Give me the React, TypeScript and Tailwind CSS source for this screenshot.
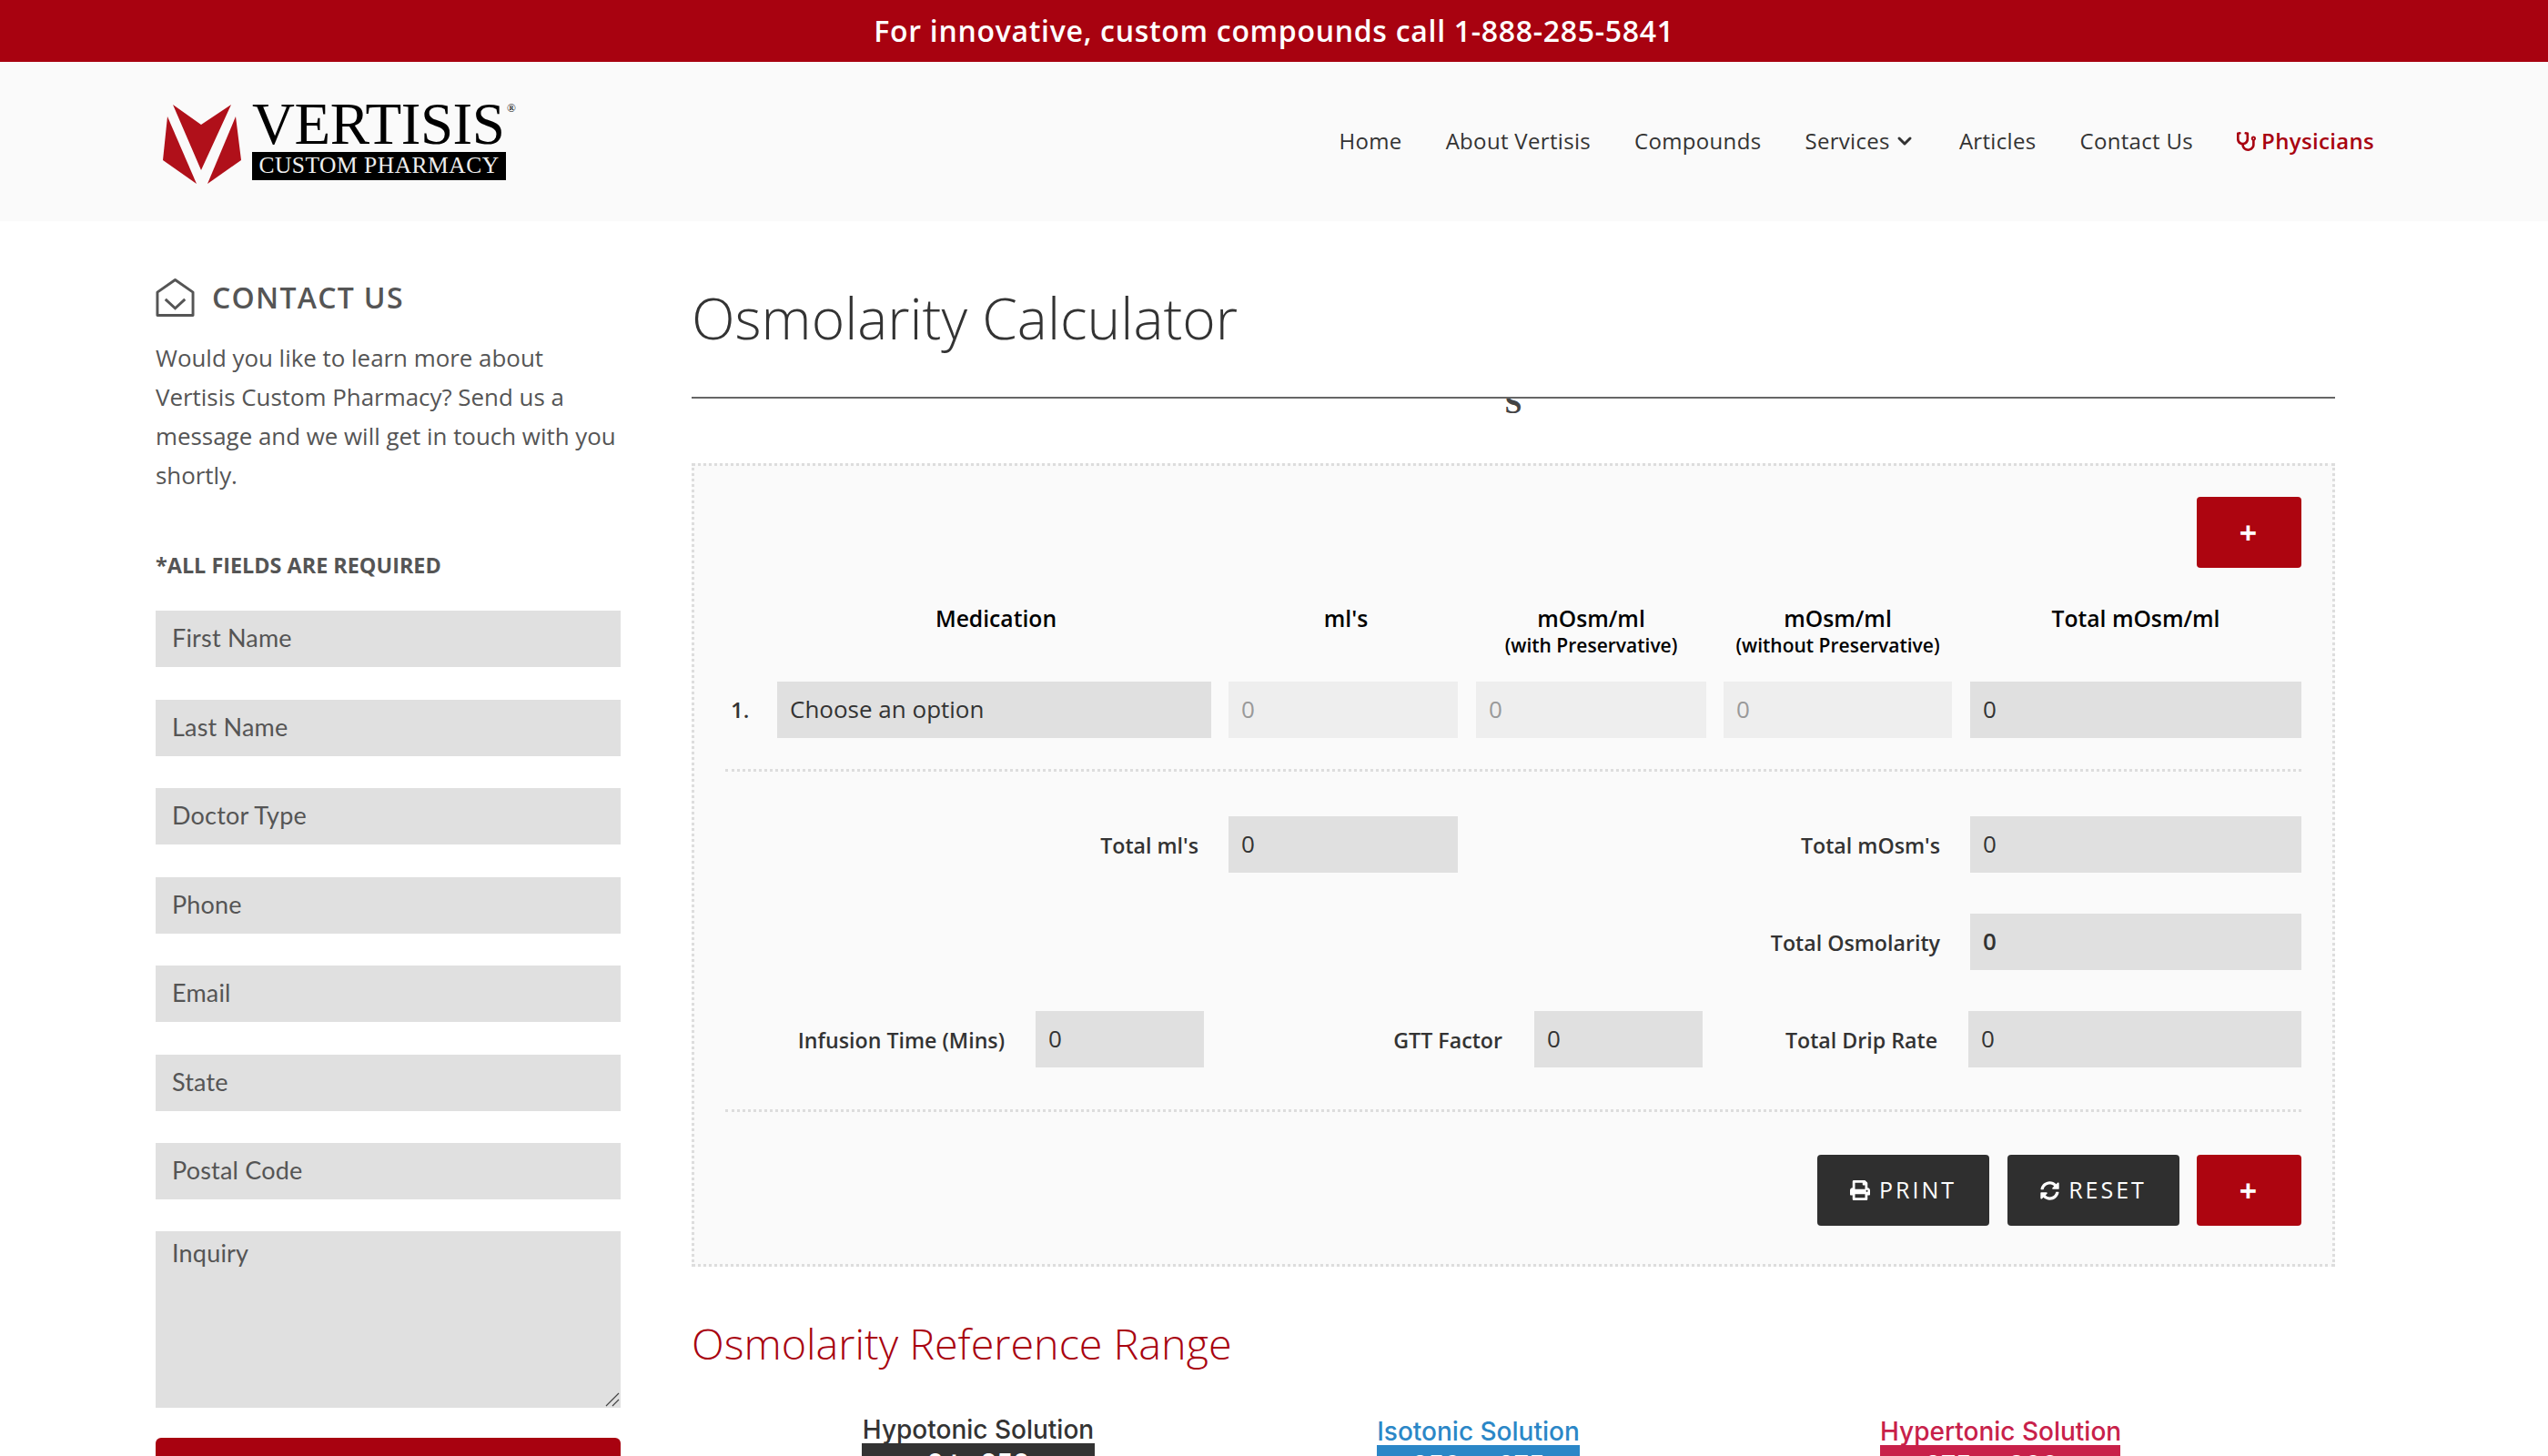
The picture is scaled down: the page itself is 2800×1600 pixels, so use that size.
import React from 'react';
import { ChevronDown } from 'lucide-react';
import { FaPrint, FaStethoscope, FaSyncAlt } from 'react-icons/fa';

const fields = ['First Name', 'Last Name', 'Doctor Type', 'Phone', 'Email', 'State', 'Postal Code'];

const Logo = () => (
  <div className="flex items-start">
    <svg width="86" height="88" viewBox="0 0 86 88">
      <path d="M11 0 L42 22 L75 0 L42 72 Z" fill="#b0101a" />
      <path d="M5 13 L37 87 L0 61 Z" fill="#b0101a" />
      <path d="M80 13 L49 87 L86 61 Z" fill="#b0101a" />
    </svg>
    <div className="ml-[12px] w-[279px]">
      <div className="relative font-['Liberation_Serif',serif] text-[65px] leading-[42px] h-[52px] text-black tracking-[-0.5px] whitespace-nowrap">
        VERTISIS
        <span className="absolute left-[280px] top-[-2px] text-[13px] leading-[12px] tracking-normal">®</span>
      </div>
      <div className="bg-black h-[31px] flex items-center justify-center font-['Liberation_Serif',serif] text-[25.5px] tracking-[0.5px] text-[#eeeeee] whitespace-nowrap">
        CUSTOM PHARMACY
      </div>
    </div>
  </div>
);

const Cell = ({ value, width, light, semi }: { value: string; width: string; light?: boolean; semi?: boolean }) => (
  <input
    readOnly
    value={value}
    className={`${width} h-[62px] px-[14px] pb-[3px] text-[26px] outline-none ${light ? 'bg-[#eeeeee] text-[#999999]' : 'bg-[#e0e0e0] text-[#333333]'} ${semi ? 'font-semibold' : ''}`}
  />
);

const Label = ({ children, className }: { children: React.ReactNode; className: string }) => (
  <div className={`${className} pt-[3px] text-[23.2px] font-semibold text-[#333333] text-right whitespace-nowrap`}>{children}</div>
);

const Head = ({ title, sub, className }: { title: string; sub?: string; className: string }) => (
  <div className={`${className} text-center text-black`}>
    <div className="text-[24.7px] font-semibold leading-[30px]">{title}</div>
    {sub && <div className="mt-[2px] text-[21px] font-semibold leading-[24px]">{sub}</div>}
  </div>
);

const Range = ({ title, value, text, bar, className }: { title: string; value: string; text: string; bar: string; className: string }) => (
  <div className={`${className} font-['Inter',sans-serif]`}>
    <div className={`text-[28px] font-medium leading-[30px] text-center whitespace-nowrap ${text}`}>{title}</div>
    <div className={`h-[44px] text-center text-[28px] font-semibold leading-[44px] text-white ${bar}`}>{value}</div>
  </div>
);

export default function App() {
  return (
    <div className="h-screen overflow-hidden bg-white font-['Open_Sans',sans-serif]">
      <div className="h-[68px] bg-[#a80210] flex items-center justify-center text-white text-[32px] font-semibold tracking-[0.7px]">
        For innovative, custom compounds call 1-888-285-5841
      </div>

      <header className="h-[175px] bg-[#fafafa] pl-[179px] pr-[191px] pt-[47px] flex justify-between items-start">
        <Logo />
        <nav className="flex items-center gap-[48px] mt-[22px] text-[24px] tracking-[0.32px] text-[#333333]">
          <span>Home</span>
          <span>About Vertisis</span>
          <span>Compounds</span>
          <span className="flex items-center gap-[4px]">
            Services <ChevronDown size={24} strokeWidth={3} />
          </span>
          <span>Articles</span>
          <span>Contact Us</span>
          <span className="flex items-center gap-[6px] font-semibold text-[#a80210]">
            <FaStethoscope size={21} /> Physicians
          </span>
        </nav>
      </header>

      <div className="flex pl-[171px] pr-[234px] gap-[78px]">
        <aside className="w-[511px] pt-[60px] shrink-0">
          <div className="flex items-center gap-[19px]">
            <svg width="43" height="44" viewBox="0 0 44 44" fill="none" stroke="#555555" strokeWidth="3">
              <path d="M2 16 L22 2 L42 16 V42 H2 Z" strokeLinejoin="round" />
              <path d="M11 24 L22 34 L33 24" />
            </svg>
            <h3 className="text-[32px] font-semibold tracking-[1.3px] text-[#555555]">CONTACT US</h3>
          </div>
          <p className="mt-[21px] text-[25.9px] leading-[43px] text-[#555555]">
            Would you like to learn more about Vertisis Custom Pharmacy? Send us a message and we will get in touch with you shortly.
          </p>
          <div className="mt-[60px] text-[23.4px] font-bold text-[#555555]">*ALL FIELDS ARE REQUIRED</div>
          <div className="mt-[32px] flex flex-col gap-[35.5px]">
            {fields.map((f) => (
              <input
                key={f}
                placeholder={f}
                className="h-[62px] bg-[#e0e0e0] px-[18px] pb-[3px] text-[27px] tracking-[0.2px] outline-none placeholder:text-[#555555] font-['Lato',sans-serif]"
              />
            ))}
          </div>
          <div className="relative mt-[35px]">
            <textarea
              placeholder="Inquiry"
              className="block w-full h-[194px] resize-none bg-[#e0e0e0] px-[18px] pt-[4px] text-[27px] tracking-[0.2px] outline-none placeholder:text-[#555555] font-['Lato',sans-serif]"
            />
            <svg width="16" height="16" viewBox="0 0 16 16" className="absolute right-[1px] bottom-[1px]" stroke="#444444" strokeWidth="1.2">
              <path d="M1 15 L15 1 M8 15 L15 8" />
            </svg>
          </div>
          <div className="mt-[33px] h-[70px] rounded-[6px] bg-[#a80210]" />
        </aside>

        <main className="flex-1 min-w-0">
          <h1 className="pt-[62px] text-[62.3px] font-light leading-[88px] text-[#333333]">Osmolarity Calculator</h1>
          <div className="relative mt-[43px] h-[2px] bg-[#666666]">
            <div className="absolute left-[889px] top-[2px] w-[28px] h-[18px] overflow-hidden">
              <span className="block text-center font-['Liberation_Serif',serif] text-[34px] font-bold leading-[18px] text-[#444444] mt-[-4px]">S</span>
            </div>
          </div>

          <section className="mt-[71px] h-[883px] border-[3px] border-dotted border-[#dddddd] bg-[#fafafa] px-[34px] pt-[34px]">
            <div className="flex justify-end">
              <div className="w-[115px] h-[78px] rounded-[4px] bg-[#ad0510] text-white flex items-center justify-center pr-[2px] text-[34px] font-bold">+</div>
            </div>

            <div className="mt-[41px] flex h-[68px]">
              <Head className="ml-[59px] w-[477px]" title="Medication" />
              <Head className="ml-[20px] w-[252px]" title="ml's" />
              <Head className="ml-[17px] w-[253px]" title="mOsm/ml" sub="(with Preservative)" />
              <Head className="ml-[19px] w-[251px]" title="mOsm/ml" sub="(without Preservative)" />
              <Head className="ml-[20px] w-[364px]" title="Total mOsm/ml" />
            </div>

            <div className="mt-[16px] flex items-center">
              <div className="w-[57px] pl-[6px] text-[24px] font-semibold text-[#333333]">1.</div>
              <Cell width="w-[477px]" value="Choose an option" />
              <Cell width="ml-[19px] w-[252px]" value="0" light />
              <Cell width="ml-[20px] w-[253px]" value="0" light />
              <Cell width="ml-[19px] w-[251px]" value="0" light />
              <Cell width="ml-[20px] w-[364px]" value="0" />
            </div>

            <div className="mt-[34px] border-t-[3px] border-dotted border-[#dddddd]" />

            <div className="mt-[49px] flex items-center">
              <Label className="w-[520px]">Total ml's</Label>
              <Cell width="ml-[33px] w-[252px]" value="0" />
              <Label className="w-[530px]">Total mOsm's</Label>
              <Cell width="ml-[33px] w-[364px]" value="0" />
            </div>

            <div className="mt-[45px] flex items-center justify-end">
              <Label className="">Total Osmolarity</Label>
              <Cell width="ml-[33px] w-[364px]" value="0" semi />
            </div>

            <div className="mt-[45px] flex items-center">
              <Label className="w-[307px]">Infusion Time (Mins)</Label>
              <Cell width="ml-[34px] w-[185px]" value="0" />
              <Label className="w-[328px]">GTT Factor</Label>
              <Cell width="ml-[35px] w-[185px]" value="0" />
              <Label className="w-[258px]">Total Drip Rate</Label>
              <Cell width="ml-[34px] w-[366px]" value="0" />
            </div>

            <div className="mt-[46px] border-t-[3px] border-dotted border-[#dddddd]" />

            <div className="mt-[47px] flex justify-end gap-[20px]">
              <div className="w-[189px] h-[78px] rounded-[4px] bg-[#2f2f2f] text-white flex items-center justify-center gap-[10px] text-[25px] tracking-[3px]">
                <FaPrint size={22} /> PRINT
              </div>
              <div className="w-[189px] h-[78px] rounded-[4px] bg-[#2f2f2f] text-white flex items-center justify-center gap-[10px] text-[25px] tracking-[3px]">
                <FaSyncAlt size={21} /> RESET
              </div>
              <div className="ml-[-1px] w-[115px] h-[78px] rounded-[4px] bg-[#ad0510] text-white flex items-center justify-center pr-[2px] text-[34px] font-bold">+</div>
            </div>
          </section>

          <h2 className="mt-[52px] text-[46.7px] font-light leading-[64px] text-[#a80210]">Osmolarity Reference Range</h2>

          <div className="mt-[48px] flex">
            <Range className="ml-[187px] w-[256px]" title="Hypotonic Solution" value="0 to 250" text="text-[#333333]" bar="bg-[#333333]" />
            <Range className="ml-[310px] w-[223px] mt-[2px]" title="Isotonic Solution" value="250 to 375" text="text-[#2b87c7]" bar="bg-[#2b87c7]" />
            <Range className="ml-[330px] w-[264px] mt-[2px]" title="Hypertonic Solution" value="375 to 900+" text="text-[#c8214a]" bar="bg-[#c8214a]" />
          </div>
        </main>
      </div>
    </div>
  );
}
